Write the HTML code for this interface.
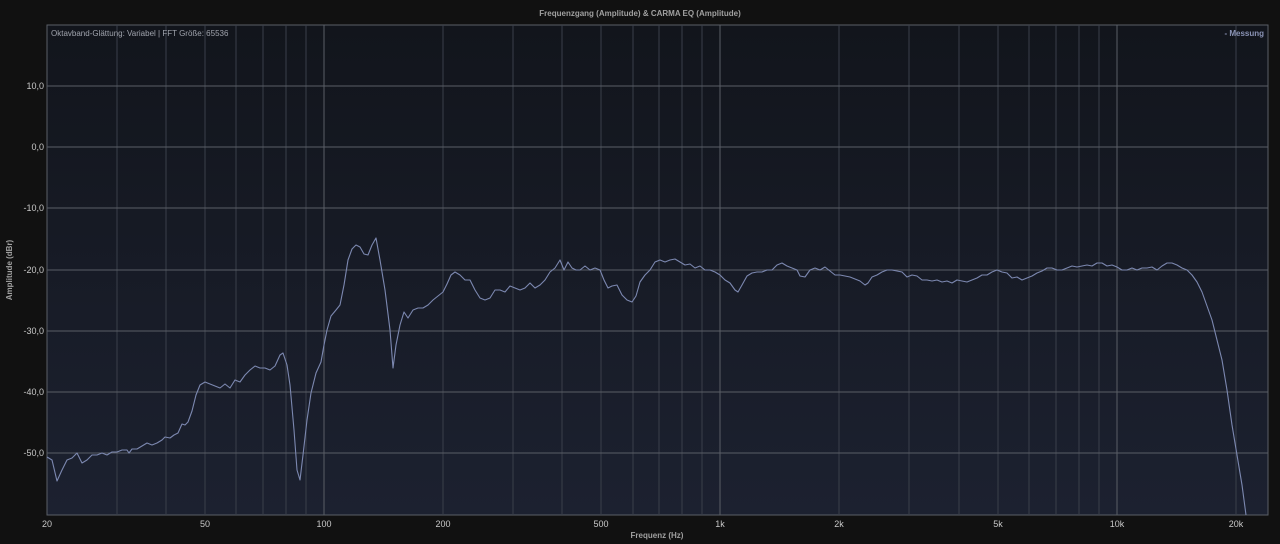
<!DOCTYPE html>
<html><head><meta charset="utf-8"><style>
html,body{margin:0;padding:0;background:#111111;width:1280px;height:544px;overflow:hidden}
svg{display:block}
text{font-family:"Liberation Sans",sans-serif}
</style></head><body>
<svg width="1280" height="544" viewBox="0 0 1280 544" xmlns="http://www.w3.org/2000/svg">
<defs><linearGradient id="bg" x1="0" y1="0" x2="0" y2="1"><stop offset="0" stop-color="#12151c"/><stop offset="1" stop-color="#1c2130"/></linearGradient></defs>
<rect width="1280" height="544" fill="#111111"/>
<rect x="47" y="25" width="1221" height="490" fill="url(#bg)" stroke="#5a5e66" stroke-width="1"/>
<g stroke="#3a3f4a" stroke-width="1">
<line x1="117" y1="25" x2="117" y2="515"/><line x1="166" y1="25" x2="166" y2="515"/><line x1="205" y1="25" x2="205" y2="515"/><line x1="236" y1="25" x2="236" y2="515"/><line x1="263" y1="25" x2="263" y2="515"/><line x1="286" y1="25" x2="286" y2="515"/><line x1="306" y1="25" x2="306" y2="515"/>
<line x1="443" y1="25" x2="443" y2="515"/><line x1="513" y1="25" x2="513" y2="515"/><line x1="562" y1="25" x2="562" y2="515"/><line x1="601" y1="25" x2="601" y2="515"/><line x1="633" y1="25" x2="633" y2="515"/><line x1="659" y1="25" x2="659" y2="515"/><line x1="682" y1="25" x2="682" y2="515"/><line x1="702" y1="25" x2="702" y2="515"/>
<line x1="839" y1="25" x2="839" y2="515"/><line x1="909" y1="25" x2="909" y2="515"/><line x1="959" y1="25" x2="959" y2="515"/><line x1="998" y1="25" x2="998" y2="515"/><line x1="1029" y1="25" x2="1029" y2="515"/><line x1="1056" y1="25" x2="1056" y2="515"/><line x1="1079" y1="25" x2="1079" y2="515"/><line x1="1099" y1="25" x2="1099" y2="515"/>
<line x1="1236" y1="25" x2="1236" y2="515"/>
</g>
<g stroke="#5a5e66" stroke-width="1">
<line x1="324" y1="25" x2="324" y2="515"/><line x1="720" y1="25" x2="720" y2="515"/><line x1="1117" y1="25" x2="1117" y2="515"/>
<line x1="47" y1="86" x2="1268" y2="86"/><line x1="47" y1="147" x2="1268" y2="147"/><line x1="47" y1="208" x2="1268" y2="208"/><line x1="47" y1="270" x2="1268" y2="270"/><line x1="47" y1="331" x2="1268" y2="331"/><line x1="47" y1="392" x2="1268" y2="392"/><line x1="47" y1="453" x2="1268" y2="453"/>
</g>
<polyline fill="none" stroke="#7c88b0" stroke-width="1.1" stroke-linejoin="round" points="47,457 52,460 57,481 62,470 67,460 72,458 77,453 82,463 87,460 92,455 97,455 102,453 107,455 112,452 117,452 122,450 127,450 129,453 132,449 137,449 142,446 147,443 152,445 157,443 162,440 165,437 170,438 174,435 178,433 182,424 185,425 188,422 192,411 196,395 200,385 205,382 210,384 215,386 220,388 225,384 230,388 235,380 240,382 245,375 250,370 255,366 260,368 265,368 270,370 275,366 280,355 283,353 287,365 290,385 294,430 297,470 300,480 303,455 307,420 311,393 316,373 321,362 324,345 327,330 331,316 336,310 340,305 344,285 348,260 352,249 356,245 360,247 364,254 368,255 372,245 376,238 380,260 385,290 390,330 393,368 396,345 400,325 404,312 408,318 413,310 418,308 423,308 428,305 433,300 438,296 443,292 447,284 451,275 455,272 460,275 465,280 470,280 475,290 480,298 485,300 490,298 495,290 500,290 505,292 510,286 515,288 520,290 525,288 530,283 535,288 540,285 545,280 550,272 555,268 560,260 564,270 568,262 572,268 576,270 580,270 585,266 590,270 595,268 600,270 604,280 608,288 612,286 617,285 622,295 627,300 632,302 636,296 640,282 645,275 650,270 655,262 660,260 665,262 670,260 675,259 680,262 685,265 690,264 695,268 700,266 705,270 710,270 715,272 720,275 725,280 730,283 735,290 738,292 742,285 747,276 752,273 757,272 762,272 767,270 772,270 777,265 782,263 787,266 792,268 797,270 800,276 805,277 810,270 815,268 820,270 825,267 830,271 835,275 840,275 845,276 850,277 855,279 860,281 865,285 868,283 872,277 877,275 882,272 887,270 892,270 897,271 902,272 907,277 912,275 917,276 922,280 927,280 932,281 937,280 942,282 947,281 952,283 957,280 962,281 967,282 972,280 977,278 982,275 987,275 992,272 997,270 1002,272 1007,273 1012,278 1017,277 1022,280 1027,278 1032,276 1037,273 1042,271 1047,268 1052,268 1057,270 1062,270 1067,268 1072,266 1077,267 1082,266 1087,265 1092,266 1097,263 1102,263 1107,266 1112,265 1117,267 1122,270 1127,270 1132,268 1137,270 1142,268 1147,268 1152,267 1157,270 1162,266 1167,263 1172,263 1177,265 1182,268 1187,270 1192,275 1197,282 1202,292 1207,306 1212,320 1217,340 1222,360 1227,390 1232,425 1237,455 1242,485 1246,515"/>
<text x="640" y="16" text-anchor="middle" font-size="8" font-weight="bold" fill="#a0a0a0">Frequenzgang (Amplitude) &amp; CARMA EQ (Amplitude)</text>
<text x="51" y="36" font-size="8" fill="#a0a4ad">Oktavband-Glättung: Variabel | FFT Größe: 65536</text>
<text x="1264" y="36" text-anchor="end" font-size="8" font-weight="bold" fill="#8a93b5">- Messung</text>
<g font-size="9" fill="#c8c8c8" text-anchor="end">
<text x="44" y="89">10,0</text><text x="44" y="150">0,0</text><text x="44" y="211">-10,0</text><text x="44" y="273">-20,0</text><text x="44" y="334">-30,0</text><text x="44" y="395">-40,0</text><text x="44" y="456">-50,0</text>
</g>
<g font-size="9" fill="#c8c8c8" text-anchor="middle">
<text x="47" y="527">20</text><text x="205" y="527">50</text><text x="324" y="527">100</text><text x="443" y="527">200</text><text x="601" y="527">500</text><text x="720" y="527">1k</text><text x="839" y="527">2k</text><text x="998" y="527">5k</text><text x="1117" y="527">10k</text><text x="1236" y="527">20k</text>
</g>
<text x="657" y="538" text-anchor="middle" font-size="8" font-weight="bold" fill="#a0a0a0">Frequenz (Hz)</text>
<text transform="translate(12,270) rotate(-90)" text-anchor="middle" font-size="8" font-weight="bold" fill="#a0a0a0">Amplitude (dBr)</text>
</svg>
</body></html>
